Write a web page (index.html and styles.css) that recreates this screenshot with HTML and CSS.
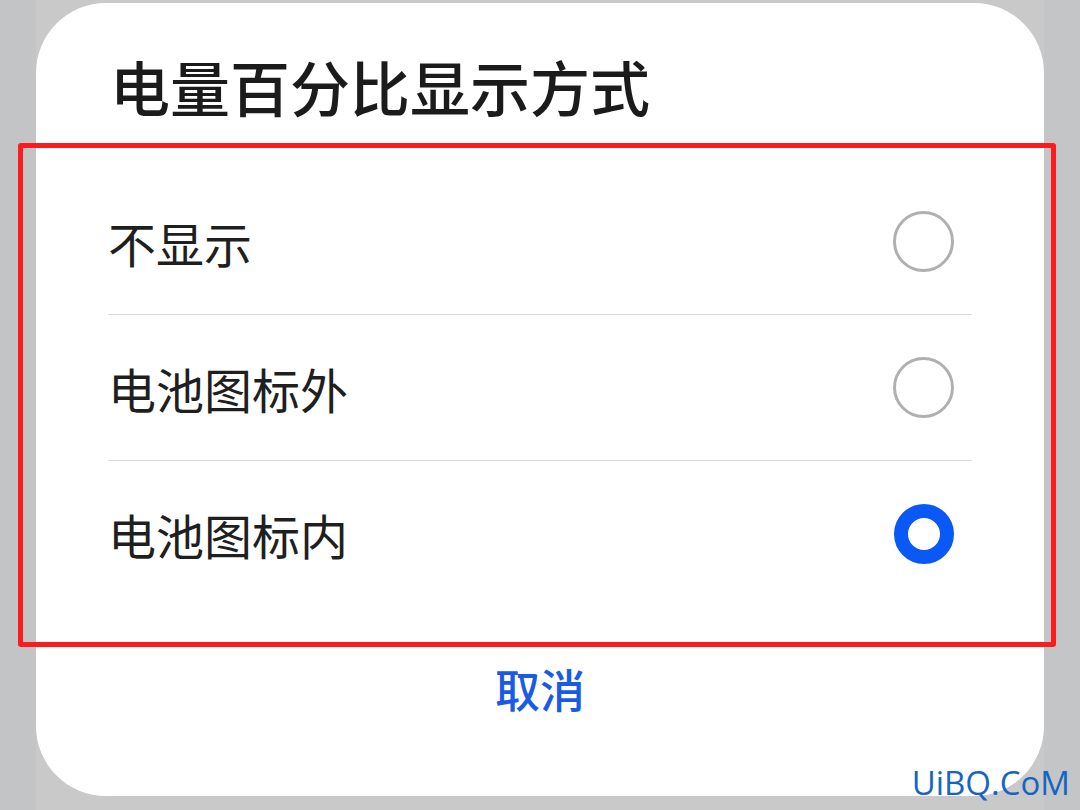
FILE: index.html
```html
<!DOCTYPE html>
<html lang="zh-CN">
<head>
    <meta charset="UTF-8">
    <title>电量百分比显示方式</title>
    <link rel="stylesheet" href="styles.css">
</head>
<body>
    <div class="screen">
        <div class="dialog">
            <h2 class="title">电量百分比显示方式</h2>
            <ul class="options">
                <li class="option">
                    <span class="label">不显示</span>
                    <span class="radio"></span>
                </li>
                <li class="option">
                    <span class="label">电池图标外</span>
                    <span class="radio"></span>
                </li>
                <li class="option">
                    <span class="label">电池图标内</span>
                    <span class="radio checked"></span>
                </li>
            </ul>
            <div class="cancel">取消</div>
        </div>
        <!-- 标注红框 -->
        <div class="mark"></div>
        <div class="watermark">UiBQ.CoM</div>
    </div>
</body>
</html>
```

FILE: styles.css
```css
html, body {
    margin: 0;
    padding: 0;
}
body {
    background: #c8c8c8;
    font-family: "Noto Sans CJK SC", "Noto Sans", sans-serif;
}
.screen {
    position: relative;
    width: 1080px;
    height: 810px;
    box-sizing: border-box;
    padding: 3px 36px 0 36px;
    background: linear-gradient(to right, #c3c4c6 0, #c3c4c6 36px, #c9c9c9 36px, #c9c9c9 1044px, #c4c5c7 1044px);
}
.dialog {
    height: 793px;
    background: #fff;
    border-radius: 70px;
    display: flex;
    flex-direction: column;
}
.title {
    margin: 53px 0 0 74px;
    font-size: 60px;
    line-height: 60px;
    font-weight: 500;
    color: #1b1b1b;
}
.options {
    margin: 53px 0 0 0;
    padding: 0 72px;
    list-style: none;
}
.option {
    height: 145px;
    display: flex;
    align-items: center;
    justify-content: space-between;
    border-bottom: 1px solid #dcdcdc;
}
.option:last-child {
    border-bottom: none;
}
.label {
    font-size: 48px;
    color: #1f1f1f;
}
.radio {
    width: 55px;
    height: 55px;
    margin-right: 18px;
    border: 3px solid #b0b0b0;
    border-radius: 50%;
}
.radio.checked {
    width: 32px;
    height: 32px;
    border: 14px solid #0a59f7;
}
.cancel {
    margin-top: 53px;
    text-align: center;
    font-size: 45px;
    line-height: 60px;
    font-weight: 500;
    color: #1a5be6;
}
.mark {
    position: absolute;
    left: 18px;
    top: 143px;
    width: 1028px;
    height: 494px;
    border: 5px solid #fb1d1d;
    border-radius: 3px;
}
.watermark {
    position: absolute;
    right: 10px;
    bottom: 12px;
    font-family: "Open Sans", "DejaVu Sans", sans-serif;
    font-size: 33px;
    line-height: 30px;
    color: #1565c4;
}
```
